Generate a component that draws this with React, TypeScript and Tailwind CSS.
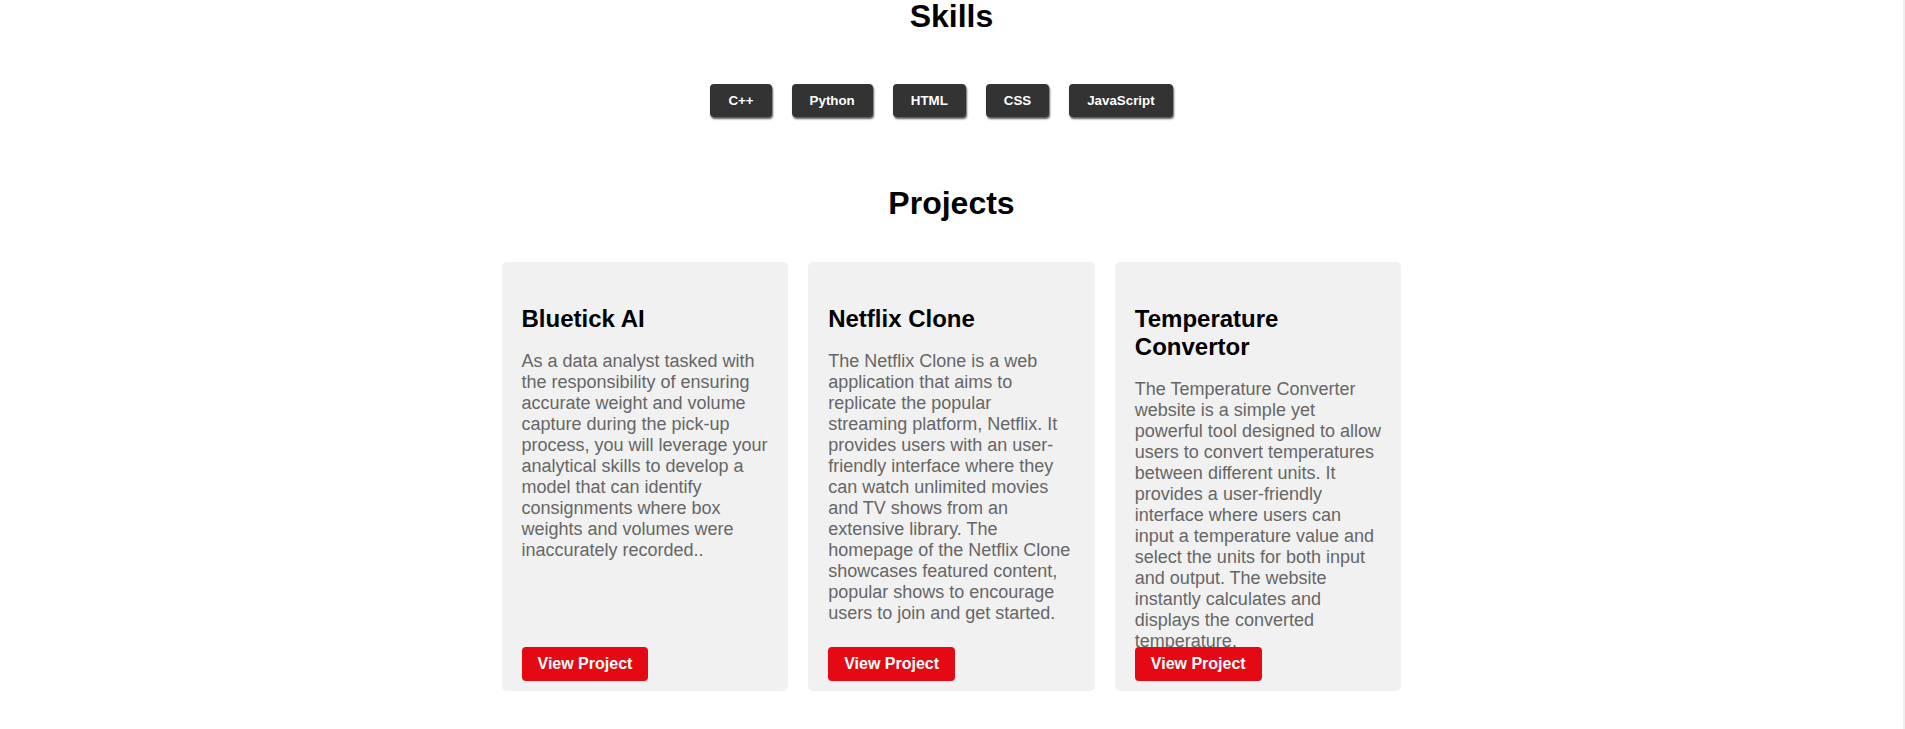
const skills = ["C++", "Python", "HTML", "CSS", "JavaScript"];

const projects = [
  {
    title: "Bluetick AI",
    text: "As a data analyst tasked with the responsibility of ensuring accurate weight and volume capture during the pick-up process, you will leverage your analytical skills to develop a model that can identify consignments where box weights and volumes were inaccurately recorded..",
  },
  {
    title: "Netflix Clone",
    text: "The Netflix Clone is a web application that aims to replicate the popular streaming platform, Netflix. It provides users with an user-friendly interface where they can watch unlimited movies and TV shows from an extensive library. The homepage of the Netflix Clone showcases featured content, popular shows to encourage users to join and get started.",
  },
  {
    title: "Temperature Convertor",
    text: "The Temperature Converter website is a simple yet powerful tool designed to allow users to convert temperatures between different units. It provides a user-friendly interface where users can input a temperature value and select the units for both input and output. The website instantly calculates and displays the converted temperature.",
  },
];

const App = () => {
  return (
    <div className="min-h-screen bg-white border-r-2 border-[#efefef] font-['Liberation_Sans',Arial,sans-serif] leading-[normal] overflow-hidden">
      {/* Skills */}
      <section className="flex flex-col items-center">
        <h2 className="-mt-[2px] text-[32px] leading-[normal] font-bold text-black">Skills</h2>
        <div className="mt-[49px] flex">
          {skills.map((s) => (
            <button
              key={s}
              className="mr-5 px-[18px] py-[9px] bg-[#333333] text-white text-[13.33px] leading-[15px] font-bold rounded-[4px] shadow-[1px_2px_2px_rgba(0,0,0,0.65)]"
            >
              {s}
            </button>
          ))}
        </div>
      </section>

      {/* Projects */}
      <section className="flex flex-col items-center">
        <h2 className="mt-[68px] text-[32px] leading-[normal] font-bold text-black">Projects</h2>
        <div className="mt-[40px] w-[900px] grid grid-cols-3 gap-5">
          {projects.map((p) => (
            <div
              key={p.title}
              className="relative h-[429px] bg-[#f1f1f1] rounded-[5px] px-5 pt-[43px]"
            >
              <h3 className="text-[24px] leading-[normal] font-bold text-black">{p.title}</h3>
              <p className="mt-[18px] text-[18px] leading-[normal] text-[#666666]">{p.text}</p>
              <button className="absolute left-5 bottom-[10px] px-4 py-2 bg-[#e50914] text-white text-[16px] leading-[normal] font-bold rounded-[4px]">
                View Project
              </button>
            </div>
          ))}
        </div>
      </section>
    </div>
  );
};

export default App;
